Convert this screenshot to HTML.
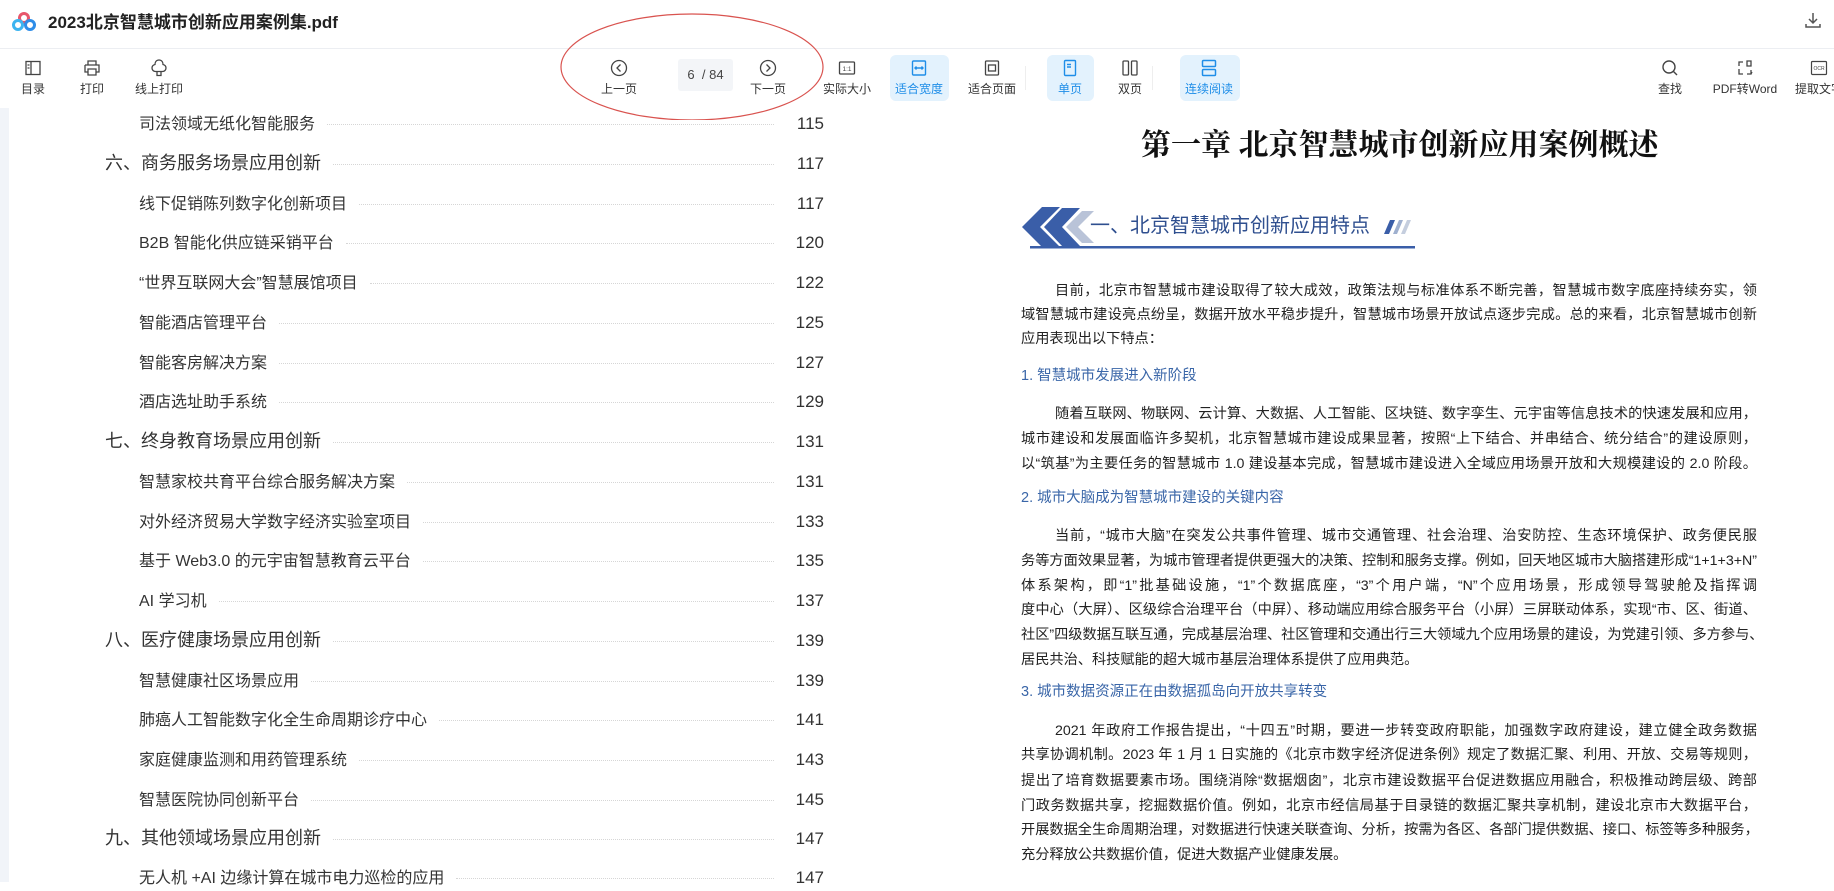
<!DOCTYPE html>
<html><head><meta charset="utf-8"><style>
*{margin:0;padding:0;box-sizing:border-box}
body{width:1834px;height:882px;overflow:hidden;background:#fff;font-family:"Liberation Sans","Noto Sans CJK SC",sans-serif;color:#333;position:relative}
.abs{position:absolute}
.tb{position:absolute;top:0;height:108px;text-align:center;font-size:12px;color:#333}
.tb svg{position:absolute;top:58px;left:50%;margin-left:-10px}
.tb span{position:absolute;top:81px;left:50%;transform:translateX(-50%);white-space:nowrap;line-height:16px}
.act{position:absolute;background:#e3f2fd;border-radius:6px;top:55px;height:46px}
.blue span{color:#1f8ee8}
.row{position:absolute;left:0;width:824px;height:30px;display:flex;align-items:center}
.row .t{white-space:nowrap;padding-right:12px}
.row .d{flex:1;border-bottom:1px dotted #d6d6d6;height:0;margin-right:20px;margin-top:4px}
.row .n{width:30px;text-align:right;font-size:17px;color:#333;margin-top:3px}
.sub{padding-left:139px;font-size:16px}
.main{padding-left:105px;font-size:18px}
.ln{position:absolute;left:1021px;width:736px;font-size:14.2px;line-height:20px;white-space:nowrap;text-align:justify;text-align-last:justify;color:#222;font-family:"Liberation Sans","Noto Sans CJK SC",sans-serif}
.ln.l{text-align-last:left}
.ln.i{padding-left:34px}
.h{position:absolute;left:1021px;font-size:14.5px;color:#3a66a8;line-height:20px;white-space:nowrap}
</style></head><body>
<svg class="abs" style="left:12px;top:12px" width="24" height="20" viewBox="0 0 24 20"><circle cx="12" cy="6" r="4.5" fill="none" stroke="#e8566b" stroke-width="3"/><circle cx="6" cy="13" r="4.5" fill="none" stroke="#3cb4f0" stroke-width="3"/><circle cx="18" cy="13" r="4.5" fill="none" stroke="#2e8de8" stroke-width="3"/></svg>
<div class="abs" style="left:48px;top:12px;font-size:17px;font-weight:bold;color:#222;line-height:22px">2023北京智慧城市创新应用案例集.pdf</div>
<svg class="abs" style="left:1804px;top:11px" width="18" height="18" viewBox="0 0 18 18" fill="none" stroke="#555" stroke-width="1.5"><path d="M9 2v10M5 8l4 4 4-4M2 13v3h14v-3"/></svg>
<div class="abs" style="left:0;top:48px;width:1834px;height:1px;background:#eceef2"></div>
<div class="act" style="left:890px;width:59px"></div>
<div class="act" style="left:1047px;width:47px"></div>
<div class="act" style="left:1180px;width:60px"></div>
<div class="abs" style="left:1025px;top:66px;width:1px;height:24px;background:#eee"></div>
<div class="abs" style="left:1152px;top:66px;width:1px;height:24px;background:#eee"></div>
<div class="tb" style="left:13px;width:40px"><svg width="20" height="20" viewBox="0 0 20 20" fill="none" stroke="#444" stroke-width="1.3"><rect x="3" y="3.5" width="14" height="13"/><path d="M8 3.5v13M4.5 7h2M4.5 10h2"/></svg><span>目录</span></div>
<div class="tb" style="left:72px;width:40px"><svg width="20" height="20" viewBox="0 0 20 20" fill="none" stroke="#444" stroke-width="1.3"><path d="M6 7V3h8v4M3 7h14v7h-3M6 14H3V7M6 11h8v6H6z"/></svg><span>打印</span></div>
<div class="tb" style="left:129px;width:60px"><svg width="20" height="20" viewBox="0 0 20 20" fill="none" stroke="#444" stroke-width="1.3"><path d="M10 2c-3 0-4 2.5-4 4.5-2 .5-3 2-3 3.5 0 2 1.5 3.5 3.5 3.5h7c2 0 3.5-1.5 3.5-3.5 0-1.5-1-3-3-3.5 0-2-1-4.5-4-4.5zM8 13.5v4h4v-4"/></svg><span>线上打印</span></div>
<svg class="abs" style="left:0;top:0" width="1834" height="120"><ellipse cx="692" cy="67" rx="131" ry="53" fill="none" stroke="#d9534f" stroke-width="1.2"/></svg>
<div class="tb" style="left:599px;width:40px"><svg width="20" height="20" viewBox="0 0 20 20" fill="none" stroke="#444" stroke-width="1.3"><circle cx="10" cy="10" r="7.5"/><path d="M11.5 6.5 8 10l3.5 3.5"/></svg><span>上一页</span></div>
<div class="abs" style="left:678px;top:59px;width:55px;height:32px;background:#f3f5f8;border-radius:3px;font-size:13px;line-height:32px;text-align:center;color:#444">6 &nbsp;/ 84</div>
<div class="tb" style="left:748px;width:40px"><svg width="20" height="20" viewBox="0 0 20 20" fill="none" stroke="#444" stroke-width="1.3"><circle cx="10" cy="10" r="7.5"/><path d="M8.5 6.5 12 10l-3.5 3.5"/></svg><span>下一页</span></div>
<div class="tb" style="left:822px;width:50px"><svg width="20" height="20" viewBox="0 0 20 20" fill="none" stroke="#444" stroke-width="1.3"><rect x="2.5" y="4" width="15" height="12" rx="1"/><text x="10" y="13" font-size="6.5" text-anchor="middle" fill="#444" stroke="none" font-family="Liberation Sans">1:1</text></svg><span>实际大小</span></div>
<div class="tb blue" style="left:894px;width:50px"><svg width="20" height="20" viewBox="0 0 20 20" fill="none" stroke="#1f8ee8" stroke-width="1.4"><rect x="3.5" y="3" width="13" height="14" rx="1"/><path d="M6 10h8M7.5 8.5 6 10l1.5 1.5M12.5 8.5 14 10l-1.5 1.5"/></svg><span>适合宽度</span></div>
<div class="tb" style="left:967px;width:50px"><svg width="20" height="20" viewBox="0 0 20 20" fill="none" stroke="#444" stroke-width="1.3"><rect x="3.5" y="3" width="13" height="14" rx="1"/><rect x="6.5" y="7" width="7" height="6"/></svg><span>适合页面</span></div>
<div class="tb blue" style="left:1050px;width:40px"><svg width="20" height="20" viewBox="0 0 20 20" fill="none" stroke="#1f8ee8" stroke-width="1.4"><rect x="4.5" y="2.5" width="11" height="15" rx="1"/><path d="M7 6.5h4M7 9h4"/></svg><span>单页</span></div>
<div class="tb" style="left:1110px;width:40px"><svg width="20" height="20" viewBox="0 0 20 20" fill="none" stroke="#444" stroke-width="1.3"><rect x="3" y="3" width="5.5" height="14" rx="1"/><rect x="11.5" y="3" width="5.5" height="14" rx="1"/></svg><span>双页</span></div>
<div class="tb blue" style="left:1184px;width:50px"><svg width="20" height="20" viewBox="0 0 20 20" fill="none" stroke="#1f8ee8" stroke-width="1.5"><rect x="3.5" y="2.5" width="13" height="6" rx="1"/><rect x="3.5" y="11.5" width="13" height="6" rx="1"/></svg><span>连续阅读</span></div>
<div class="tb" style="left:1650px;width:40px"><svg width="20" height="20" viewBox="0 0 20 20" fill="none" stroke="#444" stroke-width="1.4"><circle cx="9" cy="9" r="6"/><path d="M13.5 13.5 17 17"/></svg><span>查找</span></div>
<div class="tb" style="left:1715px;width:60px"><svg width="20" height="20" viewBox="0 0 20 20" fill="none" stroke="#444" stroke-width="1.3"><path d="M4 8V4h4M4 11v5h4M12 3h4v5h-4zM12 16h4v-4M17 14l-1 2"/></svg><span>PDF转Word</span></div>
<div class="tb" style="left:1799px;width:40px"><svg width="20" height="20" viewBox="0 0 20 20" fill="none" stroke="#444" stroke-width="1.2"><rect x="2.5" y="3.5" width="15" height="13" rx="1"/><text x="10" y="12" font-size="5" text-anchor="middle" fill="#444" stroke="none" font-family="Liberation Sans">OCR</text></svg><span>提取文字</span></div>
<div class="abs" style="left:0;top:108px;width:9px;height:774px;background:#f1f4f9"></div>
<div class="row sub" style="top:107px"><span class="t">司法领域无纸化智能服务</span><span class="d"></span><span class="n">115</span></div>
<div class="row main" style="top:147px"><span class="t">六、商务服务场景应用创新</span><span class="d"></span><span class="n">117</span></div>
<div class="row sub" style="top:187px"><span class="t">线下促销陈列数字化创新项目</span><span class="d"></span><span class="n">117</span></div>
<div class="row sub" style="top:226px"><span class="t">B2B 智能化供应链采销平台</span><span class="d"></span><span class="n">120</span></div>
<div class="row sub" style="top:266px"><span class="t">“世界互联网大会”智慧展馆项目</span><span class="d"></span><span class="n">122</span></div>
<div class="row sub" style="top:306px"><span class="t">智能酒店管理平台</span><span class="d"></span><span class="n">125</span></div>
<div class="row sub" style="top:346px"><span class="t">智能客房解决方案</span><span class="d"></span><span class="n">127</span></div>
<div class="row sub" style="top:385px"><span class="t">酒店选址助手系统</span><span class="d"></span><span class="n">129</span></div>
<div class="row main" style="top:425px"><span class="t">七、终身教育场景应用创新</span><span class="d"></span><span class="n">131</span></div>
<div class="row sub" style="top:465px"><span class="t">智慧家校共育平台综合服务解决方案</span><span class="d"></span><span class="n">131</span></div>
<div class="row sub" style="top:505px"><span class="t">对外经济贸易大学数字经济实验室项目</span><span class="d"></span><span class="n">133</span></div>
<div class="row sub" style="top:544px"><span class="t">基于 Web3.0 的元宇宙智慧教育云平台</span><span class="d"></span><span class="n">135</span></div>
<div class="row sub" style="top:584px"><span class="t">AI 学习机</span><span class="d"></span><span class="n">137</span></div>
<div class="row main" style="top:624px"><span class="t">八、医疗健康场景应用创新</span><span class="d"></span><span class="n">139</span></div>
<div class="row sub" style="top:664px"><span class="t">智慧健康社区场景应用</span><span class="d"></span><span class="n">139</span></div>
<div class="row sub" style="top:703px"><span class="t">肺癌人工智能数字化全生命周期诊疗中心</span><span class="d"></span><span class="n">141</span></div>
<div class="row sub" style="top:743px"><span class="t">家庭健康监测和用药管理系统</span><span class="d"></span><span class="n">143</span></div>
<div class="row sub" style="top:783px"><span class="t">智慧医院协同创新平台</span><span class="d"></span><span class="n">145</span></div>
<div class="row main" style="top:822px"><span class="t">九、其他领域场景应用创新</span><span class="d"></span><span class="n">147</span></div>
<div class="row sub" style="top:861px"><span class="t">无人机 +AI 边缘计算在城市电力巡检的应用</span><span class="d"></span><span class="n">147</span></div>
<div class="abs" style="left:1141px;top:127px;width:497px;text-align:center;font-size:30px;font-weight:bold;line-height:38px;color:#111;white-space:nowrap;font-family:'Liberation Serif','Noto Serif CJK SC',serif">第一章 北京智慧城市创新应用案例概述</div>
<svg class="abs" style="left:1018px;top:204px" width="400" height="48" viewBox="0 0 400 48"><path d="M4 23 24 3h18L22 23l20 20H24z" fill="#3a5ea8"/><path d="M26 23 44 4h18L44 23l18 19H44z" fill="#3a5ea8"/><path d="M48 23 64 7h12L60 23l16 16H64z" fill="#b9c3d8"/><path d="M366 30l6-14h5l-6 14z" fill="#3a5ea8"/><path d="M375 30l6-14h4l-6 14z" fill="#9fb0cf"/><path d="M383 30l6-14h4l-6 14z" fill="#c5cede"/><rect x="12" y="42" width="385" height="2.5" fill="#3a5ea8"/></svg>
<div class="abs" style="left:1090px;top:212px;font-size:20px;line-height:28px;color:#2f4f8f;white-space:nowrap">一、北京智慧城市创新应用特点</div>
<div class="ln i" style="top:281px">目前，北京市智慧城市建设取得了较大成效，政策法规与标准体系不断完善，智慧城市数字底座持续夯实，领</div>
<div class="ln" style="top:305px">域智慧城市建设亮点纷呈，数据开放水平稳步提升，智慧城市场景开放试点逐步完成。总的来看，北京智慧城市创新</div>
<div class="ln l" style="top:329px">应用表现出以下特点：</div>
<div class="h" style="top:366px">1. 智慧城市发展进入新阶段</div>
<div class="ln i" style="top:404px">随着互联网、物联网、云计算、大数据、人工智能、区块链、数字孪生、元宇宙等信息技术的快速发展和应用，</div>
<div class="ln" style="top:429px">城市建设和发展面临许多契机，北京智慧城市建设成果显著，按照“上下结合、并串结合、统分结合”的建设原则，</div>
<div class="ln" style="top:454px">以“筑基”为主要任务的智慧城市 1.0 建设基本完成，智慧城市建设进入全域应用场景开放和大规模建设的 2.0 阶段。</div>
<div class="h" style="top:488px">2. 城市大脑成为智慧城市建设的关键内容</div>
<div class="ln i" style="top:526px">当前，“城市大脑”在突发公共事件管理、城市交通管理、社会治理、治安防控、生态环境保护、政务便民服</div>
<div class="ln" style="top:551px">务等方面效果显著，为城市管理者提供更强大的决策、控制和服务支撑。例如，回天地区城市大脑搭建形成“1+1+3+N”</div>
<div class="ln" style="top:576px">体系架构，即“1”批基础设施，“1”个数据底座，“3”个用户端，“N”个应用场景，形成领导驾驶舱及指挥调</div>
<div class="ln" style="top:600px">度中心（大屏）、区级综合治理平台（中屏）、移动端应用综合服务平台（小屏）三屏联动体系，实现“市、区、街道、</div>
<div class="ln" style="top:625px">社区”四级数据互联互通，完成基层治理、社区管理和交通出行三大领域九个应用场景的建设，为党建引领、多方参与、</div>
<div class="ln l" style="top:650px">居民共治、科技赋能的超大城市基层治理体系提供了应用典范。</div>
<div class="h" style="top:682px">3. 城市数据资源正在由数据孤岛向开放共享转变</div>
<div class="ln i" style="top:721px">2021 年政府工作报告提出，“十四五”时期，要进一步转变政府职能，加强数字政府建设，建立健全政务数据</div>
<div class="ln" style="top:745px">共享协调机制。2023 年 1 月 1 日实施的《北京市数字经济促进条例》规定了数据汇聚、利用、开放、交易等规则，</div>
<div class="ln" style="top:771px">提出了培育数据要素市场。围绕消除“数据烟囱”，北京市建设数据平台促进数据应用融合，积极推动跨层级、跨部</div>
<div class="ln" style="top:796px">门政务数据共享，挖掘数据价值。例如，北京市经信局基于目录链的数据汇聚共享机制，建设北京市大数据平台，</div>
<div class="ln" style="top:820px">开展数据全生命周期治理，对数据进行快速关联查询、分析，按需为各区、各部门提供数据、接口、标签等多种服务，</div>
<div class="ln l" style="top:845px">充分释放公共数据价值，促进大数据产业健康发展。</div>
</body></html>
